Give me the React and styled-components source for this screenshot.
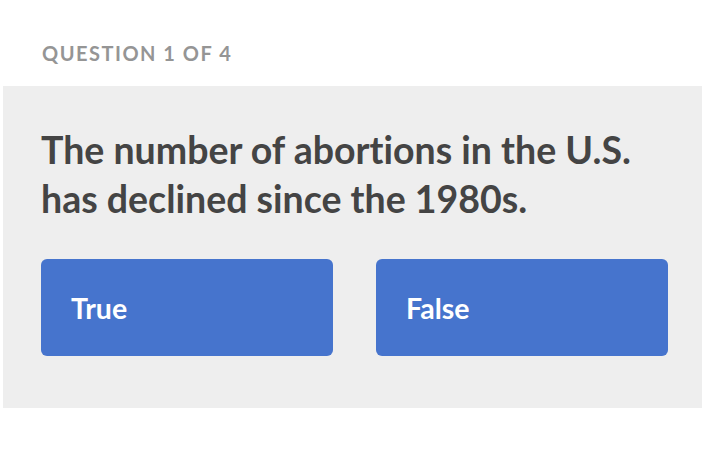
import React from "react";
import styled, { createGlobalStyle } from "styled-components";

const Global = createGlobalStyle`
  html, body { margin: 0; padding: 0; background: #ffffff; }
  body {
    font-family: Lato, "Noto Sans", sans-serif;
    font-variant-ligatures: none;
  }
`;

const Page = styled.div`
  padding: 40px 0 0 3px;
`;

const Label = styled.div`
  padding-left: 39px;
  font-size: 20px;
  line-height: 26px;
  font-weight: 700;
  letter-spacing: 1.5px;
  color: #959595;
  margin-bottom: 20px;
`;

const Panel = styled.section`
  background: #eeeeee;
  padding: 39px 35px 52px 38px;
`;

const Question = styled.h1`
  margin: 0 0 36px;
  font-size: 37.5px;
  line-height: 49px;
  font-weight: 700;
  color: #444444;
  white-space: nowrap;
`;

const Options = styled.div`
  display: grid;
  grid-template-columns: 292px 292px;
  column-gap: 43px;
`;

const Option = styled.button`
  height: 97px;
  border: none;
  border-radius: 6px;
  background: #4674cd;
  color: #ffffff;
  font-family: Lato, "Noto Sans", sans-serif;
  font-variant-ligatures: none;
  font-size: 28.5px;
  font-weight: 700;
  text-align: left;
  padding: 0 0 0 30px;
  cursor: pointer;
`;

export default function App() {
  return (
    <>
      <Global />
      <Page>
        <Label>QUESTION 1 OF 4</Label>
        <Panel>
          <Question>
            The number of abortions in the U.S.
            <br />
            has declined since the 1980s.
          </Question>
          <Options>
            <Option>True</Option>
            <Option>False</Option>
          </Options>
        </Panel>
      </Page>
    </>
  );
}
